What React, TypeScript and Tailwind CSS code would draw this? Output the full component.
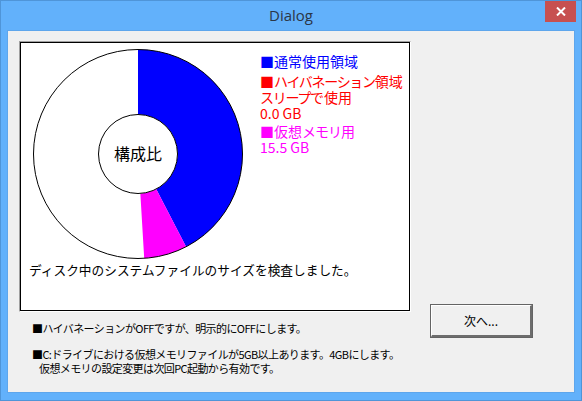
import React from "react";

const jp = "font-['MS_UI_Gothic','Noto_Sans_CJK_JP',sans-serif]";

// annulus sector, angles in degrees clockwise from 12 o'clock
const sector = (cx: number, cy: number, R: number, r: number, a0: number, a1: number) => {
  const pt = (rad: number, a: number) => {
    const t = (a * Math.PI) / 180;
    return `${(cx + rad * Math.sin(t)).toFixed(2)} ${(cy - rad * Math.cos(t)).toFixed(2)}`;
  };
  const large = a1 - a0 > 180 ? 1 : 0;
  return `M ${pt(R, a0)} A ${R} ${R} 0 ${large} 1 ${pt(R, a1)} L ${pt(r, a1)} A ${r} ${r} 0 ${large} 0 ${pt(r, a0)} Z`;
};

const Pie = () => {
  const c = 106;
  const R = 104.5;
  const r = 39.5;
  return (
    <svg width={212} height={212} viewBox="0 0 212 212" className="shrink-0 block">
      <circle cx={c} cy={c} r={R} fill="#ffffff" />
      <path d={sector(c, c, R, r, 0, 152.6)} fill="#0000ff" />
      <path d={sector(c, c, R, r, 152.6, 176.6)} fill="#ff00ff" />
      <circle cx={c} cy={c} r={R} fill="none" stroke="#000" strokeWidth={1} />
      <circle cx={c} cy={c} r={r} fill="#ffffff" stroke="#000" strokeWidth={1} />
      <text
        x={c}
        y={c + 6}
        textAnchor="middle"
        fontSize={16}
        fontFamily="'Noto Sans CJK JP', sans-serif"
        fill="#000"
      >
        構成比
      </text>
    </svg>
  );
};

const Line = ({ color, children, gap = "" }: { color: string; children: React.ReactNode; gap?: string }) => (
  <div className={`h-[16px] leading-[16px] overflow-visible ${color} ${gap}`}>{children}</div>
);

const Legend = () => (
  <div className={`${jp} ml-[16px] pt-[10px] text-[14px] whitespace-nowrap flex flex-col`}>
    <Line color="text-[#0000ff]">■通常使用領域</Line>
    <Line color="text-[#ff0000]" gap="mt-[4px]">
      ■<span className="tracking-[-1.3px]">ハイバネーション</span>領域
    </Line>
    <Line color="text-[#ff0000]">
      <span className="tracking-[-1.3px]">スリープ</span>で使用
    </Line>
    <Line color="text-[#ff0000]">0.0 GB</Line>
    <Line color="text-[#ff00ff]" gap="mt-[2px]">
      ■仮想<span className="tracking-[-1px]">メモリ</span>用
    </Line>
    <Line color="text-[#ff00ff]">15.5 GB</Line>
  </div>
);

export default function App() {
  return (
    <div className="w-[582px] h-[401px] bg-[#62b1fb] border border-[#4f95d8] flex flex-col">
      <div className="h-[29px] relative flex items-center justify-center">
        <span className="font-['Open_Sans',sans-serif] text-[15px] text-[#2b3646] pb-[1px]">Dialog</span>
        <div className="absolute right-[5px] top-0 w-[31px] h-[21px] bg-[#c75050] flex items-center justify-center">
          <svg width={10} height={9} viewBox="0 0 10 9">
            <path d="M1 0.5 L9 8.5 M9 0.5 L1 8.5" stroke="#fff" strokeWidth={2} />
          </svg>
        </div>
      </div>
      <div className="mx-[6px] flex-1 mb-[7px] bg-[#f0f0f0] border border-[#5ea6ec] flex">
        <div className="flex flex-col pl-[11px] pt-[10px]">
          <div className="w-[392px] h-[271px] border border-t-[#a0a0a0] border-l-[#a0a0a0] border-b-white border-r-white">
            <div className="w-full h-full border border-black bg-white flex flex-col">
              <div className="flex items-start">
                <div className="ml-[11px] mt-[5px]">
                  <Pie />
                </div>
                <Legend />
              </div>
              <div className={`${jp} ml-[8px] mt-[2px] text-[12.7px] leading-[16px] text-black whitespace-nowrap`}>
                ディスク中のシステムファイルのサイズを検査しました。
              </div>
            </div>
          </div>
          <div className={`${jp} ml-[13px] mt-[9px] text-[11px] leading-[14px] tracking-[-0.6px] text-black whitespace-nowrap`}>
            <div>■ハイバネーションがOFFですが、明示的にOFFにします。</div>
            <div className="mt-[12px]">■C:ドライブにおける仮想メモリファイルが5GB以上あります。4GBにします。</div>
            <div className="pl-[7px]">仮想メモリの設定変更は次回PC起動から有効です。</div>
          </div>
        </div>
        <div className="ml-[19px] mt-[273px]">
          <button className="w-[103px] h-[34px] border border-[#646464] bg-[#f0f0f0] p-0">
            <div className="w-full h-full border-t border-l border-white border-b-2 border-r-2 border-b-[#6d6d6d] border-r-[#6d6d6d] flex items-center justify-center">
              <span className={`${jp} text-[12px] text-black`}>次へ...</span>
            </div>
          </button>
        </div>
      </div>
    </div>
  );
}
